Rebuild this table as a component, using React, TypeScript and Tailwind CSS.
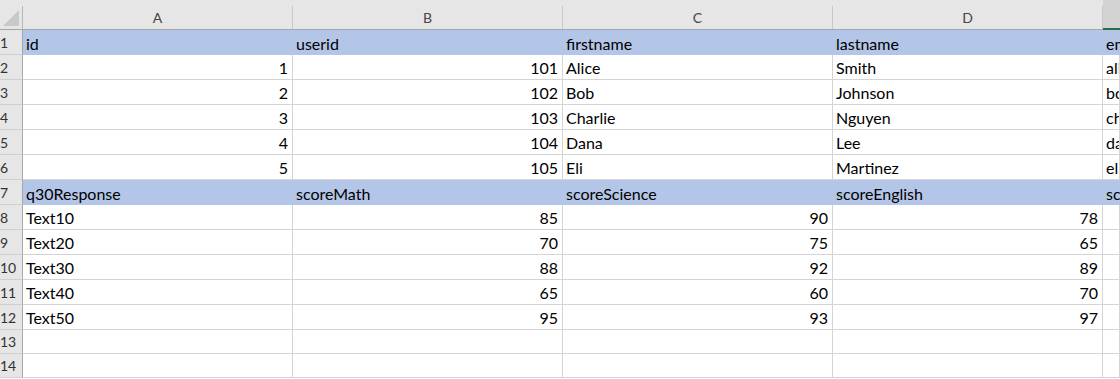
import React from "react";

type Row = { fill?: boolean; h: string; cells: (string | number)[] };

const columns = ["A", "B", "C", "D", "E"];

const rows: Row[] = [
  { fill: true, h: "h-[25px]", cells: ["id", "userid", "firstname", "lastname", "email"] },
  { h: "h-[25px]", cells: [1, 101, "Alice", "Smith", "alice@example.com"] },
  { h: "h-[25px]", cells: [2, 102, "Bob", "Johnson", "bob@example.com"] },
  { h: "h-[25px]", cells: [3, 103, "Charlie", "Nguyen", "charlie@example.com"] },
  { h: "h-[25px]", cells: [4, 104, "Dana", "Lee", "dana@example.com"] },
  { h: "h-[25px]", cells: [5, 105, "Eli", "Martinez", "eli@example.com"] },
  { fill: true, h: "h-[25px]", cells: ["q30Response", "scoreMath", "scoreScience", "scoreEnglish", "scoreHistory"] },
  { h: "h-[25px]", cells: ["Text10", 85, 90, 78, ""] },
  { h: "h-[25px]", cells: ["Text20", 70, 75, 65, ""] },
  { h: "h-[25px]", cells: ["Text30", 88, 92, 89, ""] },
  { h: "h-[25px]", cells: ["Text40", 65, 60, 70, ""] },
  { h: "h-[25px]", cells: ["Text50", 95, 93, 97, ""] },
  { h: "h-[24px]", cells: ["", "", "", "", ""] },
  { h: "h-[24px]", cells: ["", "", "", "", ""] },
];

function HeaderCell({ label, selected }: { label: string; selected?: boolean }) {
  return (
    <div
      className={
        selected
          ? "h-[30px] flex flex-col overflow-hidden bg-[#d3d3d3] border-b-2 border-[#217346]"
          : "h-[30px] flex flex-col overflow-hidden bg-[#e6e6e6] border-b border-[#a6a6a6]"
      }
    >
      <div className="h-[6px]" />
      <div
        className={
          selected
            ? "flex-1 w-[270px] shrink-0 flex justify-center pt-[5px] text-[14px] leading-[14px] text-[#444]"
            : "flex-1 flex justify-center pt-[5px] text-[14px] leading-[14px] text-[#444] border-r border-[#c8c8c8]"
        }
      >
        {label}
      </div>
    </div>
  );
}

export default function App() {
  return (
    <div
      className="w-[1120px] h-[379px] overflow-hidden bg-white"
      style={{ fontFamily: "Lato, 'Liberation Sans', sans-serif" }}
    >
      <div className="grid grid-cols-[23px_270px_270px_270px_270px_1fr]">
        {/* corner */}
        <div className="h-[30px] flex flex-col bg-[#e6e6e6] border-b border-[#a6a6a6]">
          <div className="h-[6px]" />
          <div className="flex-1 border-r border-[#b8b8b8] flex items-end justify-end pr-[3px] pb-[3px]">
            <svg width="16" height="16" viewBox="0 0 16 16">
              <polygon points="16,0 16,16 0,16" fill="#c9c9c9" />
            </svg>
          </div>
        </div>
        {columns.map((c) => (
          <HeaderCell key={c} label={c} selected={c === "E"} />
        ))}

        {rows.map((row, ri) => (
          <React.Fragment key={ri}>
            <div
              className={`${row.h} flex items-end pb-[4px] bg-[#e6e6e6] border-b border-r border-b-[#cfcfcf] border-r-[#a6a6a6] text-[14px] leading-[14px] text-[#333] overflow-hidden`}
            >
              {ri + 1}
            </div>
            {row.cells.map((v, ci) => {
              const isNum = typeof v === "number";
              const base = `${row.h} flex items-end pb-[3px] overflow-hidden whitespace-nowrap text-[16px] leading-[16px] text-black`;
              const align = isNum ? "justify-end pr-[4px]" : "justify-start pl-[3px]";
              const look = row.fill
                ? "bg-[#b4c6e7]"
                : "bg-white border-b border-r border-[#d4d4d4]";
              return (
                <div key={ci} className={`${base} ${align} ${look}`}>
                  {v}
                </div>
              );
            })}
          </React.Fragment>
        ))}
      </div>
    </div>
  );
}
